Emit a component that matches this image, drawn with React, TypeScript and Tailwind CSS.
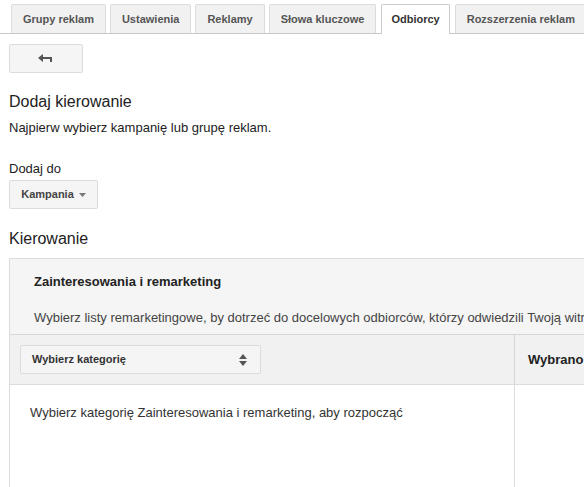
import React from 'react'

const tabs = ['Grupy reklam', 'Ustawienia', 'Reklamy', 'Słowa kluczowe', 'Odbiorcy', 'Rozszerzenia reklam']

function BackIcon() {
  return (
    <svg width="16" height="10" viewBox="0 0 16 10" className="text-[#555]">
      <path d="M0 4 L5 0 L5 8 Z" fill="currentColor" />
      <rect x="4" y="3" width="10" height="2" fill="currentColor" />
      <rect x="12" y="3" width="2" height="5" fill="currentColor" />
    </svg>
  )
}

function SortIcon() {
  return (
    <svg width="8" height="12" viewBox="0 0 8 12" className="text-[#555]">
      <path d="M4 0 L8 5 L0 5 Z" fill="currentColor" />
      <path d="M0 7 L8 7 L4 12 Z" fill="currentColor" />
    </svg>
  )
}

export default function App() {
  return (
    <div className="w-[584px] h-[487px] overflow-hidden bg-white text-[#222]" style={{ fontFamily: '"Liberation Sans", Arial, sans-serif' }}>
      {/* tabs */}
      <div className="flex items-end gap-[4px] pl-[11px] pt-[4px] border-b border-[#c8c8c8] h-[34px]">
        {tabs.map(t => {
          const active = t === 'Odbiorcy'
          return (
            <div
              key={t}
              className={
                active
                  ? 'h-[30px] -mb-px px-[9px] flex items-center bg-white border border-b-0 border-[#ccc] rounded-t-[2px] text-[11px] font-bold text-[#333] shrink-0 mx-[1px]'
                  : 'h-[29px] px-[11px] flex items-center bg-[#f1f1f1] border border-b-0 border-[#dcdcdc] rounded-t-[2px] text-[11px] font-bold text-[#555] shrink-0'
              }
            >
              {t}
            </div>
          )
        })}
      </div>

      <div className="px-[9px]">
        <button className="mt-[10px] w-[74px] h-[29px] flex items-center justify-center bg-[#f5f5f5] border border-[#dcdcdc] rounded-[2px]">
          <BackIcon />
        </button>

        <h2 className="mt-[19px] text-[16px] leading-[20px] text-[#222]">Dodaj kierowanie</h2>
        <p className="mt-[8px] text-[13px] leading-[16px] text-[#222]">Najpierw wybierz kampanię lub grupę reklam.</p>

        <p className="mt-[25px] text-[13px] leading-[16px] text-[#222]">Dodaj do</p>
        <button className="mt-[3px] h-[29px] w-[89px] flex items-center justify-center gap-[5px] bg-[#f5f5f5] border border-[#dcdcdc] rounded-[2px] text-[11px] font-bold text-[#444]">
          Kampania
          <svg width="7" height="4" viewBox="0 0 7 4" className="text-[#777]">
            <path d="M0 0 L7 0 L3.5 4 Z" fill="currentColor" />
          </svg>
        </button>

        <h2 className="mt-[20px] text-[16px] leading-[20px] text-[#222]">Kierowanie</h2>

        {/* panel */}
        <div className="mt-[9px] w-[900px] border border-[#dcdcdc] shrink-0">
          <div className="bg-[#f5f5f5] pl-[24px] pt-[15px] h-[76px] border-b border-[#d6d6d6]">
            <p className="text-[13px] leading-[16px] font-bold text-[#222]">Zainteresowania i remarketing</p>
            <p className="mt-[20px] text-[13px] leading-[16px] text-[#444] whitespace-nowrap">
              Wybierz listy remarketingowe, by dotrzeć do docelowych odbiorców, którzy odwiedzili Twoją witrynę.
            </p>
          </div>
          <div className="flex h-[50px] bg-[#f1f1f1] border-b border-[#dcdcdc]">
            <div className="w-[505px] shrink-0 flex items-center pl-[10px] border-r border-[#d6d6d6]">
              <div className="w-[241px] h-[29px] flex items-center justify-between pl-[11px] pr-[13px] bg-[#f5f5f5] border border-[#dcdcdc] rounded-[2px]">
                <span className="text-[11px] font-bold text-[#333]">Wybierz kategorię</span>
                <SortIcon />
              </div>
            </div>
            <div className="flex items-center pl-[13px] text-[13px] font-bold text-[#222]">Wybrano</div>
          </div>
          <div className="flex h-[120px]">
            <div className="w-[505px] shrink-0 border-r border-[#dcdcdc] pl-[20px] pt-[20px]">
              <p className="text-[13px] leading-[16px] text-[#333]">Wybierz kategorię Zainteresowania i remarketing, aby rozpocząć</p>
            </div>
            <div className="flex-1" />
          </div>
        </div>
      </div>
    </div>
  )
}
